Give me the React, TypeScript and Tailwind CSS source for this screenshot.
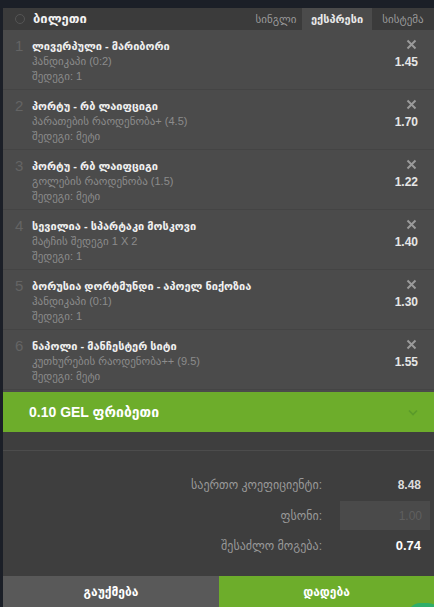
const bets = [
  { n: 1, title: "ლივერპული - მარიბორი", market: "ჰანდიკაპი (0:2)", result: "შედეგი: 1", odd: "1.45" },
  { n: 2, title: "პორტუ - რბ ლაიფციგი", market: "პარათების რაოდენობა+ (4.5)", result: "შედეგი: მეტი", odd: "1.70" },
  { n: 3, title: "პორტუ - რბ ლაიფციგი", market: "გოლების რაოდენობა (1.5)", result: "შედეგი: მეტი", odd: "1.22" },
  { n: 4, title: "სევილია - სპარტაკი მოსკოვი", market: "მატჩის შედეგი 1 X 2", result: "შედეგი: 1", odd: "1.40" },
  { n: 5, title: "ბორუსია დორტმუნდი - აპოელ ნიქოზია", market: "ჰანდიკაპი (0:1)", result: "შედეგი: 1", odd: "1.30" },
  { n: 6, title: "ნაპოლი - მანჩესტერ სიტი", market: "კუთხურების რაოდენობა++ (9.5)", result: "შედეგი: მეტი", odd: "1.55" },
];

function BetRow({ n, title, market, result, odd }: { n: number; title: string; market: string; result: string; odd: string }) {
  return (
    <div className="h-[60px] flex border-b border-[#444444] relative">
      <span className="w-[29px] pl-[12px] pt-[8px] text-[15px] leading-none text-[#646464]">{n}</span>
      <div className="flex-1 pt-[9px] flex flex-col">
        <span className="text-[11px] leading-[14px] font-bold text-[#f0f0f0]">{title}</span>
        <span className="text-[11px] leading-[15px] text-[#8c8c8c] mt-[1px]">{market}</span>
        <span className="text-[11px] leading-[14px] text-[#8c8c8c]">{result}</span>
      </div>
      <div className="w-[60px] pr-[16px] flex flex-col items-end pt-[9px]">
        <svg width="11" height="11" viewBox="0 0 11 11" className="mr-[1px]">
          <path d="M1.5 1.5 L9.5 9.5 M9.5 1.5 L1.5 9.5" stroke="#9a9a9a" strokeWidth="2" />
        </svg>
        <span className="mt-[6px] text-[12px] font-bold text-[#e6e6e6] leading-none">{odd}</span>
      </div>
    </div>
  );
}

export default function App() {
  return (
    <div
      className="w-[434px] h-[607px] bg-[#1b1f27] pt-[8px] pl-[3px] flex flex-col overflow-hidden relative"
      style={{ fontFamily: '"Liberation Sans", "DejaVu Sans", sans-serif' }}
    >
      <div className="h-[22px] bg-[#3b3b3b] flex items-stretch">
        <div className="flex items-center flex-1 pl-[12px]">
          <span className="w-[10px] h-[10px] rounded-full border border-[#555555]" />
          <span className="ml-[8px] text-[13px] font-bold text-[#f2f2f2]">ბილეთი</span>
        </div>
        <div className="w-[52px] flex items-center justify-center text-[11px] text-[#9a9a9a]">სინგლი</div>
        <div className="w-[70px] flex items-center justify-center text-[11px] font-bold text-[#e8e8e8] bg-[#4b4b4b]">ექსპრესი</div>
        <div className="w-[62px] flex items-center justify-center text-[11px] text-[#9a9a9a]">სისტემა</div>
      </div>

      <div className="bg-[#4b4b4b] pb-[2px]">
        {bets.map((b) => (
          <BetRow key={b.n} {...b} />
        ))}
      </div>

      <div className="h-[40px] bg-[#6dad2b] flex items-center justify-between pl-[26px] pr-[16px]">
        <span className="text-[14px] font-bold text-white">0.10 GEL ფრიბეთი</span>
        <svg width="10" height="7" viewBox="0 0 10 7">
          <path d="M1 1.5 L5 5.5 L9 1.5" stroke="#5a9a2a" strokeWidth="1.6" fill="none" />
        </svg>
      </div>

      <div className="h-[19px] bg-[#3e3e3e] border-b border-[#4c4c4c]" />

      <div className="flex-1 bg-[#3e3e3e] flex flex-col pt-[25px] text-[12px]">
        <div className="flex items-center h-[18px]">
          <span className="flex-1 text-right text-[#999999]">საერთო კოეფიციენტი:</span>
          <span className="w-[112px] pr-[13px] text-right font-bold text-[#dcdcdc]">8.48</span>
        </div>
        <div className="flex items-center mt-[7px]">
          <span className="flex-1 text-right text-[#999999]">ფსონი:</span>
          <div className="ml-[18px] mr-[4px] w-[90px] h-[29px] bg-[#4a4a4a] flex items-center justify-end pr-[8px] text-[#5f5f5f]">1.00</div>
        </div>
        <div className="flex items-center h-[18px] mt-[7px]">
          <span className="flex-1 text-right text-[#999999]">შესაძლო მოგება:</span>
          <span className="w-[112px] pr-[13px] text-right font-bold text-[13px] text-white">0.74</span>
        </div>
      </div>

      <div className="h-[31px] flex">
        <div className="w-[216px] bg-[#595959] flex items-center justify-center text-[12px] font-bold text-white">გაუქმება</div>
        <div className="flex-1 bg-[#6dad2b] flex items-center justify-center text-[12px] font-bold text-white">დადება</div>
      </div>

      <div className="absolute right-[-6px] bottom-[-20px] w-[32px] h-[24px] rounded-full bg-[#2fae6a]" />
    </div>
  );
}
